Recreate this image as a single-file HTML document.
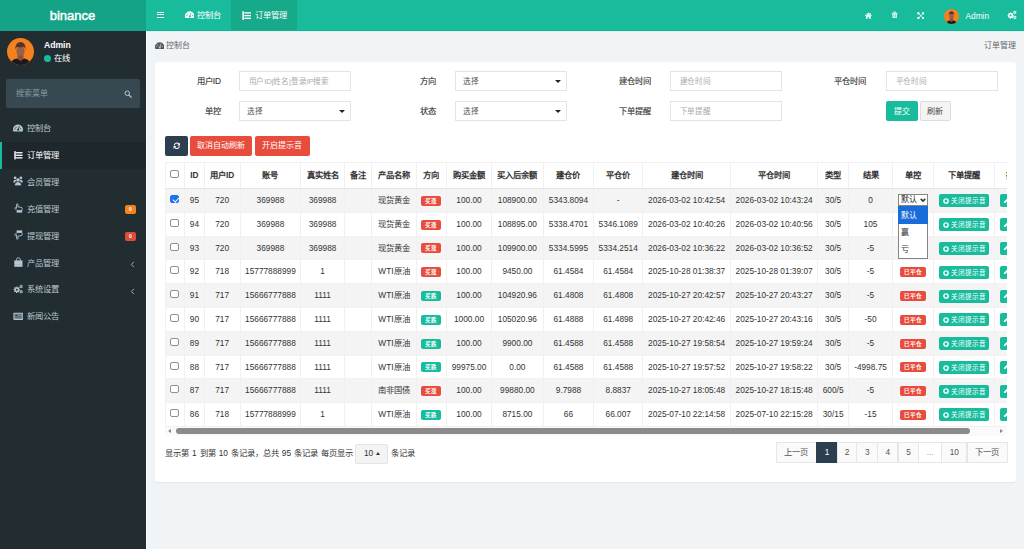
<!DOCTYPE html><html lang="zh-CN"><head><meta charset="utf-8"><style>
*{box-sizing:border-box;margin:0;padding:0}
html,body{width:1024px;height:549px;overflow:hidden;background:#f1f4f6;font-family:"Liberation Sans",sans-serif;color:#333;font-size:8.3px}
svg{display:block}
#hdr{position:absolute;left:0;top:0;width:1024px;height:31px;background:#18bc9c;border-bottom:1px solid #12b593}
#logo{position:absolute;left:0;top:0;width:146px;height:31px;background:#15a387;color:#fff;font-size:13px;text-align:center;line-height:31.5px;font-weight:normal;-webkit-text-stroke:0.45px #fff;padding-right:1px}
.hi{position:absolute}
.ht{position:absolute;color:#fff;font-size:8.3px;line-height:10px}
#side{position:absolute;left:0;top:31px;width:146px;height:518px;background:#222d32}
#sideline{position:absolute;left:146px;top:31px;width:1px;height:518px;background:#fafbfc}
.mi{position:absolute;left:0;width:146px;height:26.9px;color:#b8c7ce;font-size:8.3px;line-height:26.9px}
.mi .t{position:absolute;left:27px;top:0}
.mi svg{position:absolute;left:12.5px;top:7.7px}
.mi.act{background:#1e282c;color:#fff}
.mi.act:before{content:"";position:absolute;left:0;top:0;width:2px;height:100%;background:#18bc9c}
.badge{position:absolute;left:125px;top:9px;width:11px;height:9px;border-radius:2px;color:#fff;font-size:5px;line-height:9px;text-align:center;font-weight:bold}
.arr{position:absolute;left:130px;top:0;font-size:9px;color:#b8c7ce}
#content{position:absolute;left:147px;top:31px;width:877px;height:518px;background:#f1f4f6}
.card{position:absolute;left:155px;top:62px;width:861px;height:420px;background:#fff;border-radius:3px;box-shadow:0 1px 1px rgba(0,0,0,.06)}
.lbl{position:absolute;font-weight:normal;-webkit-text-stroke:0.12px #333;font-size:8.3px;color:#333;text-align:right;line-height:20px;width:60px}
.inp{position:absolute;width:112px;height:20px;border:1px solid #e1e4e9;border-radius:0;background:#fff;font-size:7.6px;line-height:19.5px;padding-left:8.5px;color:#aaa;letter-spacing:-0.15px}
.inp.sel{color:#555;padding-left:7.3px}
.inp.sel:after{content:"";position:absolute;right:5px;top:8px;border-left:3px solid transparent;border-right:3px solid transparent;border-top:3px solid #222}
.btn{position:absolute;height:20px;border-radius:2px;color:#fff;font-size:8px;line-height:20px;text-align:center}
#tw{position:absolute;left:165px;top:162px;width:842px;height:274px;overflow:hidden}
table{position:absolute;left:0;top:0;border-collapse:collapse;table-layout:fixed}
td,th{text-align:center;white-space:nowrap;overflow:hidden;font-size:8.3px;color:#333;border:1px solid #f1f1f1;padding:0;vertical-align:top}
th{height:26px;font-weight:bold;border-bottom:1px solid #e6e6e6;line-height:24.5px}
td{height:23.8px;line-height:20px;padding-top:1px}
tbody tr:nth-child(odd){background:#f4f4f4}
.bd{display:inline-block;height:10px;border-radius:2px;color:#fff;font-size:5.5px;line-height:10px;padding:0 4px;font-weight:bold;vertical-align:middle}
.red{background:#e74c3c}
.grn{background:#18bc9c}
.gb{display:inline-block;width:50px;height:13px;background:#18bc9c;color:#fff;border-radius:2px;font-size:6.5px;line-height:13px;vertical-align:middle;text-align:left;padding-left:4px;white-space:nowrap}
.gb i{display:inline-block;width:5.5px;height:5.5px;border:1.6px solid #fff;border-radius:50%;vertical-align:-0.5px;margin-right:1.5px;position:relative}.gb i:after{content:'';position:absolute;left:0.65px;top:0.65px;width:1px;height:1px;background:#fff;border-radius:50%}
.eb{display:inline-block;width:20px;height:13px;background:#18bc9c;border-radius:2px;vertical-align:middle}
.cb{display:inline-block;width:8.5px;height:8px;border:1px solid #909090;border-radius:2px;background:#fff;vertical-align:middle;position:relative;left:-0.5px;top:-1.8px}
.cb.on{background:#1a73e8;border-color:#1a73e8;height:8.5px}.cb.on:after{content:'';position:absolute;left:2.2px;top:0.3px;width:2.6px;height:4.8px;border:solid #fff;border-width:0 1.4px 1.4px 0;transform:rotate(40deg)}
.pg{position:absolute;top:442px;height:20.5px;border:1px solid #e6e6e6;background:#fafafa;color:#555;font-size:8.3px;line-height:19px;text-align:center}
</style></head><body><div id="hdr"><div id="logo">binance</div><div class="hi" style="left:156.8px;top:11.8px;width:7.2px;height:1.1px;background:#fff"></div><div class="hi" style="left:156.8px;top:14.1px;width:7.2px;height:1.1px;background:#fff"></div><div class="hi" style="left:156.8px;top:16.7px;width:7.2px;height:1.1px;background:#fff"></div><div class="hi" style="left:147px;top:31px;width:877px;height:1px;background:#e9ecef"></div><div class="hi" style="left:184.6px;top:10.4px"><svg width="9.56" height="9.56" viewBox="0 0 20 20" style=""><path d="M0.8 17A10 10 0 1 1 19 17Z" fill="#fff"/><circle cx="10.2" cy="13.6" r="2.1" fill="#18bc9c"/><path d="M10.2 13.6L12.8 5.8" stroke="#18bc9c" stroke-width="1.7"/><circle cx="6" cy="8.3" r="1.2" fill="#18bc9c"/><circle cx="15.4" cy="11.5" r="1.2" fill="#18bc9c"/><circle cx="3.9" cy="11.8" r="1.2" fill="#18bc9c"/></svg></div><div class="ht" style="left:196.5px;top:10px">控制台</div><div class="hi" style="left:231px;top:0;width:66px;height:30px;background:#16a98a"></div><div class="hi" style="left:240.6px;top:9.6px"><svg width="10.6" height="10.6" viewBox="0 0 20 20" style=""><rect x="2.6" y="2.4" width="3" height="16.4" fill="#fff"/><rect x="6.2" y="4.2" width="12.8" height="2.6" fill="#fff"/><rect x="6.2" y="9.3" width="12.8" height="2.6" fill="#fff"/><rect x="6.2" y="14.4" width="12.8" height="2.6" fill="#fff"/></svg></div><div class="ht" style="left:254.5px;top:10px">订单管理</div><div class="hi" style="left:864px;top:11.5px"><svg width="8.7" height="7.3" viewBox="0 0 16 16" style=""><path d="M8 1.2L0 8.2l1.2 1.3L8 3.6l6.8 5.9 1.2-1.3-3-2.6V2h-2.2v2.3z" fill="#fff"/><path d="M2.8 9L8 4.6 13.2 9v6H9.6v-4H6.4v4H2.8z" fill="#fff"/></svg></div><div class="hi" style="left:891px;top:11px"><svg width="7.3" height="7.6" viewBox="0 0 16 16" style=""><path d="M1.5 3.6h13v1.6h-13z" fill="#fff"/><path d="M5 3.6C5 1.8 6 1 8 1s3 .8 3 2.6H9.6c0-1-.5-1.3-1.6-1.3s-1.6.3-1.6 1.3z" fill="#fff"/><path d="M2.8 5.2h10.4l-.6 10H3.4z" fill="#fff"/><path d="M4.6 6.6h6.8l-.4 7.2H5z" fill="#18bc9c" opacity=".55"/><rect x="7.4" y="6.6" width="1.2" height="7.2" fill="#fff"/></svg></div><div class="hi" style="left:916.7px;top:11.6px"><svg width="7.6" height="7.4" viewBox="0 0 16 16" style=""><rect x="0.5" y="0.5" width="4.5" height="4.5" fill="#fff"/><rect x="11" y="0.5" width="4.5" height="4.5" fill="#fff"/><rect x="0.5" y="11" width="4.5" height="4.5" fill="#fff"/><rect x="11" y="11" width="4.5" height="4.5" fill="#fff"/><path d="M2.5 2.5l11 11M13.5 2.5l-11 11" stroke="#fff" stroke-width="1.8"/></svg></div><div class="hi" style="left:943.5px;top:9px"><svg width="15" height="15" viewBox="0 0 100 100" style=""><defs><clipPath id="ac15"><circle cx="50" cy="50" r="50"/></clipPath></defs><g clip-path="url(#ac15)"><rect width="100" height="100" fill="#f58020"/><path d="M12 100C14 86 22 79 36 76L50 82 64 76C78 79 86 86 88 100Z" fill="#1a1a1a"/><path d="M39 58H61V76L50 86 39 76Z" fill="#8a4f3c"/><ellipse cx="50" cy="48" rx="15.5" ry="18" fill="#98604a"/><path d="M31 43C30 26 38 15 50 15S70 26 69 43C67 37 64 33 62 32 58 35 42 35 38 32 36 33 33 37 31 43Z" fill="#5b3226"/></g></svg></div><div class="ht" style="left:965.5px;top:10.5px;font-size:8.3px">Admin</div><div class="hi" style="left:1007.1px;top:10.1px"><svg width="9.68" height="9.68" viewBox="0 0 20 20" style=""><path d="M7.60 4.80 L8.89 4.93 L9.51 6.78 L10.38 7.24 L12.27 6.73 L13.09 7.73 L12.22 9.49 L12.50 10.42 L14.20 11.40 L14.07 12.69 L12.22 13.31 L11.76 14.18 L12.27 16.07 L11.27 16.89 L9.51 16.02 L8.58 16.30 L7.60 18.00 L6.31 17.87 L5.69 16.02 L4.82 15.56 L2.93 16.07 L2.11 15.07 L2.98 13.31 L2.70 12.38 L1.00 11.40 L1.13 10.11 L2.98 9.49 L3.44 8.62 L2.93 6.73 L3.93 5.91 L5.69 6.78 L6.62 6.50Z" fill="#fff"/><circle cx="7.6" cy="11.4" r="2.1" fill="#18bc9c"/><path d="M16.20 1.40 L17.13 1.52 L17.50 2.75 L18.04 3.16 L19.32 3.20 L19.68 4.07 L18.80 5.00 L18.71 5.67 L19.32 6.80 L18.75 7.55 L17.50 7.25 L16.87 7.51 L16.20 8.60 L15.27 8.48 L14.90 7.25 L14.36 6.84 L13.08 6.80 L12.72 5.93 L13.60 5.00 L13.69 4.33 L13.08 3.20 L13.65 2.45 L14.90 2.75 L15.53 2.49Z" fill="#fff"/><circle cx="16.2" cy="5" r="1.1" fill="#18bc9c"/><path d="M16.20 11.80 L17.13 11.92 L17.50 13.15 L18.04 13.56 L19.32 13.60 L19.68 14.47 L18.80 15.40 L18.71 16.07 L19.32 17.20 L18.75 17.95 L17.50 17.65 L16.87 17.91 L16.20 19.00 L15.27 18.88 L14.90 17.65 L14.36 17.24 L13.08 17.20 L12.72 16.33 L13.60 15.40 L13.69 14.73 L13.08 13.60 L13.65 12.85 L14.90 13.15 L15.53 12.89Z" fill="#fff"/><circle cx="16.2" cy="15.4" r="1.1" fill="#18bc9c"/></svg></div></div><div id="side"><div class="hi" style="left:7px;top:6.5px"><svg width="27" height="27" viewBox="0 0 100 100" style=""><defs><clipPath id="ac27"><circle cx="50" cy="50" r="50"/></clipPath></defs><g clip-path="url(#ac27)"><rect width="100" height="100" fill="#f58020"/><path d="M12 100C14 86 22 79 36 76L50 82 64 76C78 79 86 86 88 100Z" fill="#1a1a1a"/><path d="M39 58H61V76L50 86 39 76Z" fill="#8a4f3c"/><ellipse cx="50" cy="48" rx="15.5" ry="18" fill="#98604a"/><path d="M31 43C30 26 38 15 50 15S70 26 69 43C67 37 64 33 62 32 58 35 42 35 38 32 36 33 33 37 31 43Z" fill="#5b3226"/></g></svg></div><div class="ht" style="left:44px;top:9px;font-weight:bold;font-size:8.6px">Admin</div><div class="hi" style="left:44px;top:23.5px;width:7px;height:7px;border-radius:50%;background:#18bc9c"></div><div class="ht" style="left:54px;top:22px;font-size:8.3px">在线</div><div class="hi" style="left:6px;top:48px;width:134px;height:29px;background:#374850;border-radius:2px"></div><div class="ht" style="left:15.5px;top:57.5px;color:#8a9ba3;font-size:8px">搜索菜单</div><div class="hi" style="left:123.5px;top:58.5px"><svg width="8" height="8" viewBox="0 0 16 16" style=""><circle cx="6.5" cy="6.5" r="4.5" fill="none" stroke="#b8c7ce" stroke-width="2"/><path d="M10 10l4.5 4.5" stroke="#b8c7ce" stroke-width="2.2" stroke-linecap="round"/></svg></div><div class="mi" style="top:84.00px"><svg width="10" height="10" viewBox="0 0 20 20" style=""><path d="M0.8 17A10 10 0 1 1 19 17Z" fill="#b8c7ce"/><circle cx="10.2" cy="13.6" r="2.1" fill="#222d32"/><path d="M10.2 13.6L12.8 5.8" stroke="#222d32" stroke-width="1.7"/><circle cx="6" cy="8.3" r="1.2" fill="#222d32"/><circle cx="15.4" cy="11.5" r="1.2" fill="#222d32"/><circle cx="3.9" cy="11.8" r="1.2" fill="#222d32"/></svg><span class="t">控制台</span></div><div class="mi act" style="top:110.90px"><svg width="10" height="10" viewBox="0 0 20 20" style=""><rect x="2.6" y="2.4" width="3" height="16.4" fill="#fff"/><rect x="6.2" y="4.2" width="12.8" height="2.6" fill="#fff"/><rect x="6.2" y="9.3" width="12.8" height="2.6" fill="#fff"/><rect x="6.2" y="14.4" width="12.8" height="2.6" fill="#fff"/></svg><span class="t">订单管理</span></div><div class="mi" style="top:137.80px"><svg width="10" height="10" viewBox="0 0 20 20" style=""><circle cx="4.2" cy="3.6" r="2.7" fill="#b8c7ce"/><circle cx="15.8" cy="3.6" r="2.7" fill="#b8c7ce"/><path d="M0.8 13C0.8 9 2 7.4 4.2 7.4C5.7 7.4 6.5 8.2 6.8 8.9C5.2 10.2 4.4 11.4 4.2 13Z" fill="#b8c7ce"/><path d="M19.4 13C19.4 9 18.2 7.4 15.8 7.4C14.3 7.4 13.5 8.2 13.2 8.9C14.8 10.2 15.6 11.4 15.8 13Z" fill="#b8c7ce"/><circle cx="10" cy="7.8" r="3.9" fill="#b8c7ce" stroke="#222d32" stroke-width="0.6"/><path d="M3.4 19.2C3.4 14.6 5.6 11.8 10 11.8S16.6 14.6 16.6 19.2Z" fill="#b8c7ce" stroke="#222d32" stroke-width="0.6"/></svg><span class="t">会员管理</span></div><div class="mi" style="top:164.70px"><svg width="10" height="10" viewBox="0 0 20 20" style=""><path d="M7.8 15L4.2 11.3C3.2 10.2 3.8 8.8 5.2 9.2L7.2 10.4V2.6C7.2 1.2 9.9 1.2 9.9 2.6V7.6L16.4 8.7C17.9 9 18.7 9.9 18.5 11.1L17.7 15Z" fill="none" stroke="#b8c7ce" stroke-width="1.8" stroke-linejoin="round"/><rect x="7.3" y="15.8" width="11" height="3.4" fill="#b8c7ce"/></svg><span class="t">充值管理</span><div class="badge" style="background:#f5811f">0</div></div><div class="mi" style="top:191.60px"><svg width="10" height="10" viewBox="0 0 20 20" style=""><path d="M7.8 5L4.2 8.7C3.2 9.8 3.8 11.2 5.2 10.8L7.2 9.6V17.4C7.2 18.8 9.9 18.8 9.9 17.4V12.4L16.4 11.3C17.9 11 18.7 10.1 18.5 8.9L17.7 5Z" fill="none" stroke="#b8c7ce" stroke-width="1.8" stroke-linejoin="round"/><rect x="7.3" y="0.8" width="11" height="3.4" fill="#b8c7ce"/></svg><span class="t">提现管理</span><div class="badge" style="background:#dd4b39">0</div></div><div class="mi" style="top:218.50px"><svg width="10" height="10" viewBox="0 0 20 20" style=""><path d="M7 7.5V5.4A3.8 3.8 0 0 1 14.6 5.4V7.5" fill="none" stroke="#b8c7ce" stroke-width="1.8"/><path d="M2.6 6.8H19V19.6H2.6Z" fill="#b8c7ce"/><rect x="2.6" y="14" width="16.4" height="0.8" fill="#222d32" opacity=".25"/></svg><span class="t">产品管理</span><svg width="5" height="7" viewBox="0 0 5 7" style="position:absolute;left:129.5px;top:11.8px"><path d="M3.9 0.9L1.3 3.5 3.9 6.1" fill="none" stroke="#9fb2bb" stroke-width="1"/></svg></div><div class="mi" style="top:245.40px"><svg width="10" height="10" viewBox="0 0 20 20" style=""><path d="M7.60 4.80 L8.89 4.93 L9.51 6.78 L10.38 7.24 L12.27 6.73 L13.09 7.73 L12.22 9.49 L12.50 10.42 L14.20 11.40 L14.07 12.69 L12.22 13.31 L11.76 14.18 L12.27 16.07 L11.27 16.89 L9.51 16.02 L8.58 16.30 L7.60 18.00 L6.31 17.87 L5.69 16.02 L4.82 15.56 L2.93 16.07 L2.11 15.07 L2.98 13.31 L2.70 12.38 L1.00 11.40 L1.13 10.11 L2.98 9.49 L3.44 8.62 L2.93 6.73 L3.93 5.91 L5.69 6.78 L6.62 6.50Z" fill="#b8c7ce"/><circle cx="7.6" cy="11.4" r="2.1" fill="#222d32"/><path d="M16.20 1.40 L17.13 1.52 L17.50 2.75 L18.04 3.16 L19.32 3.20 L19.68 4.07 L18.80 5.00 L18.71 5.67 L19.32 6.80 L18.75 7.55 L17.50 7.25 L16.87 7.51 L16.20 8.60 L15.27 8.48 L14.90 7.25 L14.36 6.84 L13.08 6.80 L12.72 5.93 L13.60 5.00 L13.69 4.33 L13.08 3.20 L13.65 2.45 L14.90 2.75 L15.53 2.49Z" fill="#b8c7ce"/><circle cx="16.2" cy="5" r="1.1" fill="#222d32"/><path d="M16.20 11.80 L17.13 11.92 L17.50 13.15 L18.04 13.56 L19.32 13.60 L19.68 14.47 L18.80 15.40 L18.71 16.07 L19.32 17.20 L18.75 17.95 L17.50 17.65 L16.87 17.91 L16.20 19.00 L15.27 18.88 L14.90 17.65 L14.36 17.24 L13.08 17.20 L12.72 16.33 L13.60 15.40 L13.69 14.73 L13.08 13.60 L13.65 12.85 L14.90 13.15 L15.53 12.89Z" fill="#b8c7ce"/><circle cx="16.2" cy="15.4" r="1.1" fill="#222d32"/></svg><span class="t">系统设置</span><svg width="5" height="7" viewBox="0 0 5 7" style="position:absolute;left:129.5px;top:11.8px"><path d="M3.9 0.9L1.3 3.5 3.9 6.1" fill="none" stroke="#9fb2bb" stroke-width="1"/></svg></div><div class="mi" style="top:272.30px"><svg width="10" height="10" viewBox="0 0 20 20" style=""><rect x="0.8" y="3.6" width="19.8" height="14.2" rx="1.5" fill="#b8c7ce"/><rect x="2.4" y="5.2" width="16.6" height="11" fill="#222d32" opacity=".35"/><rect x="4.5" y="7" width="4.5" height="4" fill="#222d32" opacity=".8"/><rect x="10.5" y="7" width="6.5" height="1.2" fill="#222d32" opacity=".6"/><rect x="10.5" y="10" width="6.5" height="1.2" fill="#222d32" opacity=".6"/><rect x="4.5" y="13" width="12.5" height="1.2" fill="#222d32" opacity=".6"/></svg><span class="t">新闻公告</span></div></div><div id="sideline"></div><div class="hi" style="left:154.6px;top:41.2px"><svg width="9.45" height="9.45" viewBox="0 0 20 20" style=""><path d="M0.8 17A10 10 0 1 1 19 17Z" fill="#555"/><circle cx="10.2" cy="13.6" r="2.1" fill="#c8ccd0"/><path d="M10.2 13.6L12.8 5.8" stroke="#c8ccd0" stroke-width="1.7"/><circle cx="6" cy="8.3" r="1.2" fill="#c8ccd0"/><circle cx="15.4" cy="11.5" r="1.2" fill="#c8ccd0"/><circle cx="3.9" cy="11.8" r="1.2" fill="#c8ccd0"/></svg></div><div class="ht" style="left:166px;top:41px;color:#666;font-size:8px">控制台</div><div class="ht" style="left:984px;top:41px;color:#666;font-size:8px">订单管理</div><div class="card"></div><div class="lbl" style="left:161px;top:70.7px">用户ID</div><div class="lbl" style="left:376px;top:70.7px">方向</div><div class="lbl" style="left:591px;top:70.7px">建仓时间</div><div class="lbl" style="left:806px;top:70.7px">平仓时间</div><div class="lbl" style="left:161px;top:100.7px">单控</div><div class="lbl" style="left:376px;top:100.7px">状态</div><div class="lbl" style="left:591px;top:100.7px">下单提醒</div><div class="inp" style="left:239px;top:71px">用户ID|姓名|登录IP搜索</div><div class="inp sel" style="left:455px;top:71px">选择</div><div class="inp" style="left:670px;top:71px">建仓时间</div><div class="inp" style="left:886px;top:71px">平仓时间</div><div class="inp sel" style="left:239px;top:101px">选择</div><div class="inp sel" style="left:455px;top:101px">选择</div><div class="inp" style="left:670px;top:101px">下单提醒</div><div class="btn" style="left:886px;top:101px;width:31.5px;background:#18bc9c;line-height:21.5px">提交</div><div class="btn" style="left:919.5px;top:101px;width:31.5px;background:#f4f4f4;border:1px solid #ddd;color:#444;line-height:19.5px">刷新</div><div class="btn" style="left:165px;top:136px;width:23px;background:#2c3e50"><div style="position:absolute;left:7.9px;top:5.8px"><svg width="7.6" height="7.6" viewBox="0 0 16 16" style=""><path d="M2.6 7.2A5.4 5.4 0 0 1 12.4 4.6" fill="none" stroke="#fff" stroke-width="2.3"/><path d="M14.8 1.6V7.6H8.8Z" fill="#fff"/><path d="M13.4 8.8A5.4 5.4 0 0 1 3.6 11.4" fill="none" stroke="#fff" stroke-width="2.3"/><path d="M1.2 14.4V8.4H7.2Z" fill="#fff"/></svg></div></div><div class="btn" style="left:190px;top:136px;width:62px;background:#e74c3c">取消自动刷新</div><div class="btn" style="left:255px;top:136px;width:54.5px;background:#e74c3c">开启提示音</div><div id="tw"><table style="width:874.6px"><colgroup><col style="width:19.3px"><col style="width:19.3px"><col style="width:36.0px"><col style="width:60.7px"><col style="width:43.6px"><col style="width:27.4px"><col style="width:44.3px"><col style="width:30.4px"><col style="width:45.1px"><col style="width:51.7px"><col style="width:50.5px"><col style="width:49.0px"><col style="width:87.8px"><col style="width:87.2px"><col style="width:30.8px"><col style="width:44.0px"><col style="width:41.1px"><col style="width:60.9px"><col style="width:45.5px"></colgroup><thead><tr><th><span class="cb"></span></th><th>ID</th><th>用户ID</th><th>账号</th><th>真实姓名</th><th>备注</th><th>产品名称</th><th>方向</th><th>购买金额</th><th>买入后余额</th><th>建仓价</th><th>平仓价</th><th>建仓时间</th><th>平仓时间</th><th>类型</th><th>结果</th><th>单控</th><th>下单提醒</th><th><span style="display:block;text-align:left;padding-left:11px">操作</span></th></tr></thead><tbody><tr><td><span class="cb on"></span></td><td>95</td><td>720</td><td>369988</td><td>369988</td><td></td><td>现货黄金</td><td><span class="bd red">买涨</span></td><td>100.00</td><td>108900.00</td><td>5343.8094</td><td>-</td><td>2026-03-02 10:42:54</td><td>2026-03-02 10:43:24</td><td>30/5</td><td>0</td><td><span style="display:inline-block;position:relative;width:30px;height:12px;border:1px solid #858585;background:#fff;font-size:8px;line-height:10px;text-align:left;padding-left:1.8px;vertical-align:middle;color:#222;top:-0.5px">默认<svg width="6" height="4.5" viewBox="0 0 12 9" style="position:absolute;left:21px;top:3.1px"><path d="M1.5 1.8l4.5 4.5 4.5-4.5" fill="none" stroke="#333" stroke-width="3"/></svg></span></td><td><span class="gb"><svg width="6" height="6" viewBox="0 0 12 12" style="display:inline-block;vertical-align:-0.8px;margin-right:1.8px"><circle cx="6" cy="6" r="4.3" fill="none" stroke="#fff" stroke-width="2.8"/></svg>关闭提示音</span></td><td style="text-align:left;padding-left:4.5px"><span class="eb"><svg width="6" height="6" viewBox="0 0 16 16" style="margin:3.5px 0 0 3px"><path d="M11 1.5l3.5 3.5-8.5 8.5H2.5V10z" fill="#fff"/></svg></span></td></tr><tr><td><span class="cb"></span></td><td>94</td><td>720</td><td>369988</td><td>369988</td><td></td><td>现货黄金</td><td><span class="bd red">买涨</span></td><td>100.00</td><td>108895.00</td><td>5338.4701</td><td>5346.1089</td><td>2026-03-02 10:40:26</td><td>2026-03-02 10:40:56</td><td>30/5</td><td>105</td><td></td><td><span class="gb"><svg width="6" height="6" viewBox="0 0 12 12" style="display:inline-block;vertical-align:-0.8px;margin-right:1.8px"><circle cx="6" cy="6" r="4.3" fill="none" stroke="#fff" stroke-width="2.8"/></svg>关闭提示音</span></td><td style="text-align:left;padding-left:4.5px"><span class="eb"><svg width="6" height="6" viewBox="0 0 16 16" style="margin:3.5px 0 0 3px"><path d="M11 1.5l3.5 3.5-8.5 8.5H2.5V10z" fill="#fff"/></svg></span></td></tr><tr><td><span class="cb"></span></td><td>93</td><td>720</td><td>369988</td><td>369988</td><td></td><td>现货黄金</td><td><span class="bd red">买涨</span></td><td>100.00</td><td>109900.00</td><td>5334.5995</td><td>5334.2514</td><td>2026-03-02 10:36:22</td><td>2026-03-02 10:36:52</td><td>30/5</td><td>-5</td><td></td><td><span class="gb"><svg width="6" height="6" viewBox="0 0 12 12" style="display:inline-block;vertical-align:-0.8px;margin-right:1.8px"><circle cx="6" cy="6" r="4.3" fill="none" stroke="#fff" stroke-width="2.8"/></svg>关闭提示音</span></td><td style="text-align:left;padding-left:4.5px"><span class="eb"><svg width="6" height="6" viewBox="0 0 16 16" style="margin:3.5px 0 0 3px"><path d="M11 1.5l3.5 3.5-8.5 8.5H2.5V10z" fill="#fff"/></svg></span></td></tr><tr><td><span class="cb"></span></td><td>92</td><td>718</td><td>15777888999</td><td>1</td><td></td><td>WTI原油</td><td><span class="bd red">买涨</span></td><td>100.00</td><td>9450.00</td><td>61.4584</td><td>61.4584</td><td>2025-10-28 01:38:37</td><td>2025-10-28 01:39:07</td><td>30/5</td><td>-5</td><td><span class="bd red">已平仓</span></td><td><span class="gb"><svg width="6" height="6" viewBox="0 0 12 12" style="display:inline-block;vertical-align:-0.8px;margin-right:1.8px"><circle cx="6" cy="6" r="4.3" fill="none" stroke="#fff" stroke-width="2.8"/></svg>关闭提示音</span></td><td style="text-align:left;padding-left:4.5px"><span class="eb"><svg width="6" height="6" viewBox="0 0 16 16" style="margin:3.5px 0 0 3px"><path d="M11 1.5l3.5 3.5-8.5 8.5H2.5V10z" fill="#fff"/></svg></span></td></tr><tr><td><span class="cb"></span></td><td>91</td><td>717</td><td>15666777888</td><td>1111</td><td></td><td>WTI原油</td><td><span class="bd grn">买跌</span></td><td>100.00</td><td>104920.96</td><td>61.4808</td><td>61.4808</td><td>2025-10-27 20:42:57</td><td>2025-10-27 20:43:27</td><td>30/5</td><td>-5</td><td><span class="bd red">已平仓</span></td><td><span class="gb"><svg width="6" height="6" viewBox="0 0 12 12" style="display:inline-block;vertical-align:-0.8px;margin-right:1.8px"><circle cx="6" cy="6" r="4.3" fill="none" stroke="#fff" stroke-width="2.8"/></svg>关闭提示音</span></td><td style="text-align:left;padding-left:4.5px"><span class="eb"><svg width="6" height="6" viewBox="0 0 16 16" style="margin:3.5px 0 0 3px"><path d="M11 1.5l3.5 3.5-8.5 8.5H2.5V10z" fill="#fff"/></svg></span></td></tr><tr><td><span class="cb"></span></td><td>90</td><td>717</td><td>15666777888</td><td>1111</td><td></td><td>WTI原油</td><td><span class="bd grn">买跌</span></td><td>1000.00</td><td>105020.96</td><td>61.4888</td><td>61.4898</td><td>2025-10-27 20:42:46</td><td>2025-10-27 20:43:16</td><td>30/5</td><td>-50</td><td><span class="bd red">已平仓</span></td><td><span class="gb"><svg width="6" height="6" viewBox="0 0 12 12" style="display:inline-block;vertical-align:-0.8px;margin-right:1.8px"><circle cx="6" cy="6" r="4.3" fill="none" stroke="#fff" stroke-width="2.8"/></svg>关闭提示音</span></td><td style="text-align:left;padding-left:4.5px"><span class="eb"><svg width="6" height="6" viewBox="0 0 16 16" style="margin:3.5px 0 0 3px"><path d="M11 1.5l3.5 3.5-8.5 8.5H2.5V10z" fill="#fff"/></svg></span></td></tr><tr><td><span class="cb"></span></td><td>89</td><td>717</td><td>15666777888</td><td>1111</td><td></td><td>WTI原油</td><td><span class="bd grn">买跌</span></td><td>100.00</td><td>9900.00</td><td>61.4588</td><td>61.4588</td><td>2025-10-27 19:58:54</td><td>2025-10-27 19:59:24</td><td>30/5</td><td>-5</td><td><span class="bd red">已平仓</span></td><td><span class="gb"><svg width="6" height="6" viewBox="0 0 12 12" style="display:inline-block;vertical-align:-0.8px;margin-right:1.8px"><circle cx="6" cy="6" r="4.3" fill="none" stroke="#fff" stroke-width="2.8"/></svg>关闭提示音</span></td><td style="text-align:left;padding-left:4.5px"><span class="eb"><svg width="6" height="6" viewBox="0 0 16 16" style="margin:3.5px 0 0 3px"><path d="M11 1.5l3.5 3.5-8.5 8.5H2.5V10z" fill="#fff"/></svg></span></td></tr><tr><td><span class="cb"></span></td><td>88</td><td>717</td><td>15666777888</td><td>1111</td><td></td><td>WTI原油</td><td><span class="bd grn">买跌</span></td><td>99975.00</td><td>0.00</td><td>61.4588</td><td>61.4588</td><td>2025-10-27 19:57:52</td><td>2025-10-27 19:58:22</td><td>30/5</td><td>-4998.75</td><td><span class="bd red">已平仓</span></td><td><span class="gb"><svg width="6" height="6" viewBox="0 0 12 12" style="display:inline-block;vertical-align:-0.8px;margin-right:1.8px"><circle cx="6" cy="6" r="4.3" fill="none" stroke="#fff" stroke-width="2.8"/></svg>关闭提示音</span></td><td style="text-align:left;padding-left:4.5px"><span class="eb"><svg width="6" height="6" viewBox="0 0 16 16" style="margin:3.5px 0 0 3px"><path d="M11 1.5l3.5 3.5-8.5 8.5H2.5V10z" fill="#fff"/></svg></span></td></tr><tr><td><span class="cb"></span></td><td>87</td><td>717</td><td>15666777888</td><td>1111</td><td></td><td>南非国债</td><td><span class="bd red">买涨</span></td><td>100.00</td><td>99880.00</td><td>9.7988</td><td>8.8837</td><td>2025-10-27 18:05:48</td><td>2025-10-27 18:15:48</td><td>600/5</td><td>-5</td><td><span class="bd red">已平仓</span></td><td><span class="gb"><svg width="6" height="6" viewBox="0 0 12 12" style="display:inline-block;vertical-align:-0.8px;margin-right:1.8px"><circle cx="6" cy="6" r="4.3" fill="none" stroke="#fff" stroke-width="2.8"/></svg>关闭提示音</span></td><td style="text-align:left;padding-left:4.5px"><span class="eb"><svg width="6" height="6" viewBox="0 0 16 16" style="margin:3.5px 0 0 3px"><path d="M11 1.5l3.5 3.5-8.5 8.5H2.5V10z" fill="#fff"/></svg></span></td></tr><tr><td><span class="cb"></span></td><td>86</td><td>718</td><td>15777888999</td><td>1</td><td></td><td>WTI原油</td><td><span class="bd grn">买跌</span></td><td>100.00</td><td>8715.00</td><td>66</td><td>66.007</td><td>2025-07-10 22:14:58</td><td>2025-07-10 22:15:28</td><td>30/15</td><td>-15</td><td><span class="bd red">已平仓</span></td><td><span class="gb"><svg width="6" height="6" viewBox="0 0 12 12" style="display:inline-block;vertical-align:-0.8px;margin-right:1.8px"><circle cx="6" cy="6" r="4.3" fill="none" stroke="#fff" stroke-width="2.8"/></svg>关闭提示音</span></td><td style="text-align:left;padding-left:4.5px"><span class="eb"><svg width="6" height="6" viewBox="0 0 16 16" style="margin:3.5px 0 0 3px"><path d="M11 1.5l3.5 3.5-8.5 8.5H2.5V10z" fill="#fff"/></svg></span></td></tr></tbody></table><div class="hi" style="left:0;top:265px;width:842px;height:9px;background:#fafafa"></div><div class="hi" style="left:11px;top:266.2px;width:793.5px;height:6px;border-radius:3px;background:#8b8b8b"></div><div class="hi" style="left:2.8px;top:267px;width:0;height:0;border-top:2.5px solid transparent;border-bottom:2.5px solid transparent;border-right:3.3px solid #8b8b8b"></div><div class="hi" style="left:834.8px;top:266.5px;width:0;height:0;border-top:2.8px solid transparent;border-bottom:2.8px solid transparent;border-left:3.4px solid #8b8b8b"></div></div><div class="hi" style="left:898px;top:206px;width:30px;height:52.6px;background:#fff;border:1px solid #858585;border-top:none;font-size:8px;color:#333"><div style="height:18px;background:#1b6cdb;color:#fff;line-height:20px;margin:0 -1px;padding-left:3px">默认</div><div style="height:17px;line-height:18px;padding-left:2px">赢</div><div style="height:17px;line-height:18.5px;padding-left:2px">亏</div></div><div class="ht" style="left:165px;top:448px;color:#333;font-size:8.3px;word-spacing:0.7px">显示第 1 到第 10 条记录，总共 95 条记录 每页显示</div><div class="hi" style="left:355px;top:444px;width:32.5px;height:19.5px;background:#f4f4f4;border:1px solid #e3e3e3;border-radius:2px;font-size:8.3px;line-height:17.5px;padding-left:8px;color:#333">10 <span style="display:inline-block;border-left:2.5px solid transparent;border-right:2.5px solid transparent;border-bottom:3px solid #333;vertical-align:1.5px"></span></div><div class="ht" style="left:390.5px;top:448px;color:#333;font-size:8.3px">条记录</div><div class="pg" style="left:775.5px;width:41.6px;">上一页</div><div class="pg" style="left:816.1px;width:21.9px;background:#2c3e50;color:#fff;border-color:#2c3e50;">1</div><div class="pg" style="left:837.0px;width:20.3px;">2</div><div class="pg" style="left:856.3px;width:21.9px;">3</div><div class="pg" style="left:877.2px;width:21.3px;">4</div><div class="pg" style="left:897.5px;width:21.9px;">5</div><div class="pg" style="left:918.4px;width:23.8px;background:#fff;color:#999;">...</div><div class="pg" style="left:941.2px;width:26.3px;">10</div><div class="pg" style="left:966.5px;width:41.4px;">下一页</div></body></html>
